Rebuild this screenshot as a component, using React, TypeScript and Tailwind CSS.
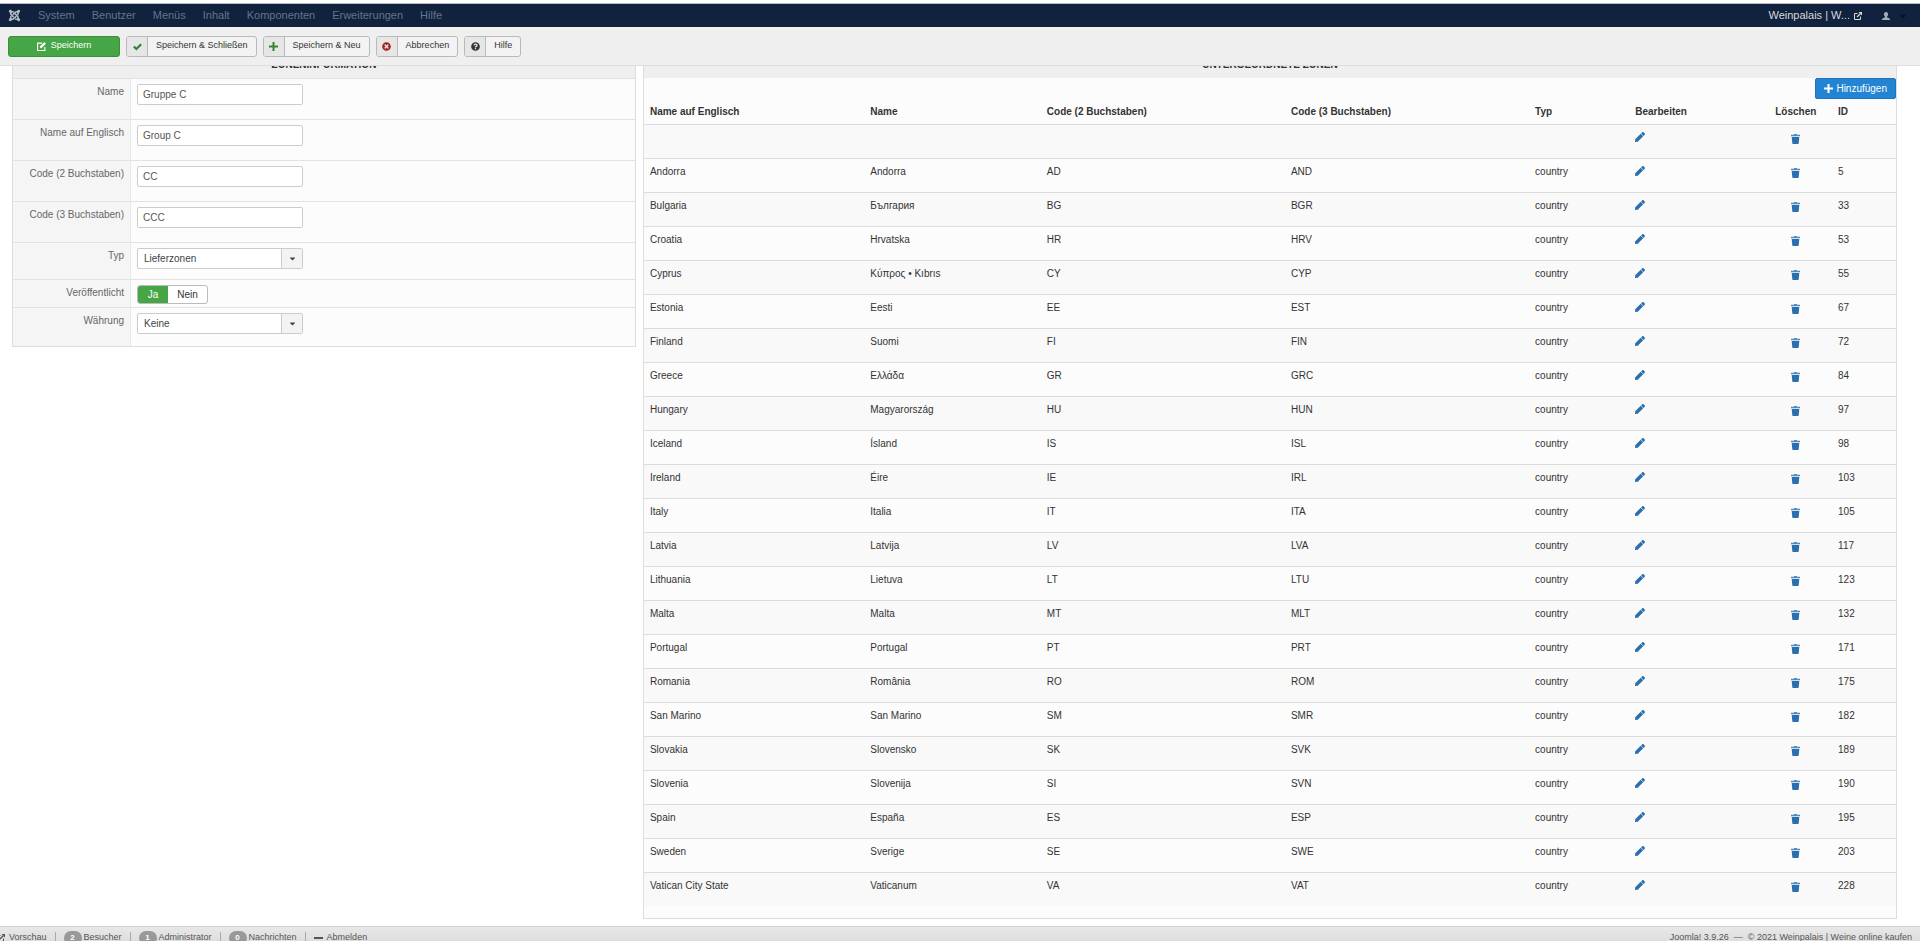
import type { ReactNode } from 'react'
import { FaCaretDown, FaJoomla, FaPen, FaQuestionCircle, FaTimesCircle } from 'react-icons/fa'

const menu = ['System', 'Benutzer', 'Menüs', 'Inhalt', 'Komponenten', 'Erweiterungen', 'Hilfe']

const zones = [
  { english: 'Andorra', name: 'Andorra', code2: 'AD', code3: 'AND', id: 5 },
  { english: 'Bulgaria', name: 'България', code2: 'BG', code3: 'BGR', id: 33 },
  { english: 'Croatia', name: 'Hrvatska', code2: 'HR', code3: 'HRV', id: 53 },
  { english: 'Cyprus', name: 'Κύπρος • Kıbrıs', code2: 'CY', code3: 'CYP', id: 55 },
  { english: 'Estonia', name: 'Eesti', code2: 'EE', code3: 'EST', id: 67 },
  { english: 'Finland', name: 'Suomi', code2: 'FI', code3: 'FIN', id: 72 },
  { english: 'Greece', name: 'Ελλάδα', code2: 'GR', code3: 'GRC', id: 84 },
  { english: 'Hungary', name: 'Magyarország', code2: 'HU', code3: 'HUN', id: 97 },
  { english: 'Iceland', name: 'Ísland', code2: 'IS', code3: 'ISL', id: 98 },
  { english: 'Ireland', name: 'Éire', code2: 'IE', code3: 'IRL', id: 103 },
  { english: 'Italy', name: 'Italia', code2: 'IT', code3: 'ITA', id: 105 },
  { english: 'Latvia', name: 'Latvija', code2: 'LV', code3: 'LVA', id: 117 },
  { english: 'Lithuania', name: 'Lietuva', code2: 'LT', code3: 'LTU', id: 123 },
  { english: 'Malta', name: 'Malta', code2: 'MT', code3: 'MLT', id: 132 },
  { english: 'Portugal', name: 'Portugal', code2: 'PT', code3: 'PRT', id: 171 },
  { english: 'Romania', name: 'România', code2: 'RO', code3: 'ROM', id: 175 },
  { english: 'San Marino', name: 'San Marino', code2: 'SM', code3: 'SMR', id: 182 },
  { english: 'Slovakia', name: 'Slovensko', code2: 'SK', code3: 'SVK', id: 189 },
  { english: 'Slovenia', name: 'Slovenija', code2: 'SI', code3: 'SVN', id: 190 },
  { english: 'Spain', name: 'España', code2: 'ES', code3: 'ESP', id: 195 },
  { english: 'Sweden', name: 'Sverige', code2: 'SE', code3: 'SWE', id: 203 },
  { english: 'Vatican City State', name: 'Vaticanum', code2: 'VA', code3: 'VAT', id: 228 },
]

const EditIcon = () => (
  <svg viewBox="0 0 16 16" className="h-[9px] w-[9px]" fill="none" stroke="currentColor" strokeWidth="2">
    <path d="M9 2H1v13h13V9" />
    <path d="M6 10l8.500-8.500" strokeWidth="4" />
  </svg>
)

const ExternalIcon = () => (
  <svg viewBox="0 0 16 16" className="h-2 w-2" fill="none" stroke="currentColor" strokeWidth="2">
    <path d="M7 3H1v12h12V9" />
    <path d="M6 10l7-7" strokeWidth="2.500" />
    <path d="M9 0h7v7z" fill="currentColor" stroke="none" />
  </svg>
)

const UserIcon = () => (
  <svg viewBox="0 0 16 16" className="h-2 w-2" fill="currentColor">
    <path d="M8 0c2.500 0 4 1.800 4 4.500 0 2-.8 3.800-2 4.700v1.500l5 2.300c.7.4 1 1 1 3H0c0-2 .3-2.600 1-3l5-2.300V9.200C4.800 8.300 4 6.500 4 4.500 4 1.800 5.500 0 8 0z" />
  </svg>
)

const PlusIcon = () => (
  <svg viewBox="0 0 9 9" className="h-[9px] w-[9px]" fill="currentColor">
    <path d="M3.500 0h2v3.500H9v2H5.500V9h-2V5.500H0v-2h3.500z" />
  </svg>
)

const CheckIcon = () => (
  <svg viewBox="0 0 16 16" className="h-[9px] w-[9px]" fill="none" stroke="currentColor" strokeWidth="4">
    <path d="M1.500 8l4.500 4.500L14.500 4" />
  </svg>
)

const TrashIcon = () => (
  <svg viewBox="0 0 9 10" className="h-[10px] w-[9px]" fill="currentColor">
    <path d="M3 0h3v.7h3v1.600H0V.7h3z" opacity=".8" />
    <path d="M.7 2.900h7.600L7.700 9.300c0 .4-.3.7-.7.7H2c-.4 0-.7-.3-.7-.7z" />
  </svg>
)

const ToolbarButton = ({ icon, children }: { icon: ReactNode; children: ReactNode }) => (
  <button type="button" className="flex h-[21px] items-stretch overflow-hidden rounded-[3px] border border-[#b9b9b9] bg-[#f3f3f3] text-[9px] text-[#333]">
    <span className="flex w-[21px] items-center justify-center border-r border-[#b9b9b9] bg-[#e6e6e6] text-[9px]">{icon}</span>
    <span className="flex items-center px-2">{children}</span>
  </button>
)

const PanelTitle = ({ children }: { children: ReactNode }) => (
  <h2 className="bg-[#efefef] text-center text-[10px] leading-[26px] font-bold text-[#333] uppercase">{children}</h2>
)

const FieldRow = ({ label, htmlFor, className, children }: { label: string; htmlFor: string; className: string; children: ReactNode }) => (
  <div className={`flex border-t border-[#e2e2e2] ${className}`}>
    <label htmlFor={htmlFor} className="w-[118px] shrink-0 border-r border-[#e8e8e8] bg-[#f5f5f5] pt-[5px] pr-[6px] text-right leading-4 text-[#666]">
      {label}
    </label>
    <div className="flex flex-1 items-start px-[6px] pt-[5px]">{children}</div>
  </div>
)

const TextField = ({ id, label, value }: { id: string; label: string; value: string }) => (
  <FieldRow label={label} htmlFor={id} className="h-[41px]">
    <input id={id} type="text" defaultValue={value} className="h-[21px] w-[166px] rounded-[2px] border border-[#ccc] bg-white px-[5px] text-[#555]" />
  </FieldRow>
)

const SelectField = ({ id, label, value, className }: { id: string; label: string; value: string; className: string }) => (
  <FieldRow label={label} htmlFor={id} className={className}>
    <div className="relative">
      <select id={id} className="block h-[21px] w-[166px] appearance-none rounded-[2px] border border-[#ccc] bg-white pl-[6px] text-[#444]">
        <option>{value}</option>
      </select>
      <span className="pointer-events-none absolute inset-y-px right-px flex w-[21px] items-center justify-center border-l border-[#ccc] bg-[#f3f3f3] text-[9px] text-[#444]">
        <FaCaretDown />
      </span>
    </div>
  </FieldRow>
)

const RowActions = () => (
  <>
    <td className="px-[6px] pt-[7px]">
      <button type="button" aria-label="Bearbeiten" className="block text-[10px] text-[#2a6fae]">
        <FaPen />
      </button>
    </td>
    <td className="px-[6px] pt-[9px]">
      <button type="button" aria-label="Löschen" className="mx-auto block text-[#2a6fae]">
        <TrashIcon />
      </button>
    </td>
  </>
)

const ZoneTable = () => (
  <table className="w-full table-fixed text-left text-[#333]">
    <colgroup>
      <col className="w-[17.6%]" />
      <col className="w-[14.1%]" />
      <col className="w-[19.5%]" />
      <col className="w-[19.5%]" />
      <col className="w-[8%]" />
      <col className="w-[10.4%]" />
      <col className="w-[5.8%]" />
      <col />
    </colgroup>
    <thead>
      <tr className="h-[25px]">
        <th className="px-[6px]">Name auf Englisch</th>
        <th className="px-[6px]">Name</th>
        <th className="px-[6px]">Code (2 Buchstaben)</th>
        <th className="px-[6px]">Code (3 Buchstaben)</th>
        <th className="px-[6px]">Typ</th>
        <th className="px-[6px]">Bearbeiten</th>
        <th className="px-[6px] text-center">Löschen</th>
        <th className="px-[6px]">ID</th>
      </tr>
    </thead>
    <tbody>
      <tr className="h-[34px] border-t border-[#ddd] align-top odd:bg-[#f9f9f9]">
        <td colSpan={5} />
        <RowActions />
        <td />
      </tr>
      {zones.map((zone) => (
        <tr key={zone.id} className="h-[34px] border-t border-[#ddd] align-top leading-4 odd:bg-[#f9f9f9]">
          <td className="px-[6px] pt-[5px]">{zone.english}</td>
          <td className="px-[6px] pt-[5px]">{zone.name}</td>
          <td className="px-[6px] pt-[5px]">{zone.code2}</td>
          <td className="px-[6px] pt-[5px]">{zone.code3}</td>
          <td className="px-[6px] pt-[5px]">country</td>
          <RowActions />
          <td className="px-[6px] pt-[5px]">{zone.id}</td>
        </tr>
      ))}
    </tbody>
  </table>
)

const Badge = ({ children }: { children: ReactNode }) => (
  <span className="flex h-[14px] w-[18px] items-center justify-center rounded-full bg-[#999] text-[8px] font-bold text-white">{children}</span>
)

const App = () => (
  <div className="flex h-screen flex-col overflow-hidden bg-white pt-[3px] font-['Liberation_Sans',Arial,sans-serif] text-[10px]">
    <nav className="flex h-6 shrink-0 items-center border-t border-[#b5bac2] bg-[#10223e] pr-3 pl-2 text-[11px] text-[#66748a]">
      <a href="#" aria-label="Joomla" className="mr-[17px] text-[13px] text-[#b4bac4]">
        <FaJoomla />
      </a>
      <div className="flex gap-[17px]">
        {menu.map((item) => (
          <a key={item} href="#">
            {item}
          </a>
        ))}
      </div>
      <a href="#" className="ml-auto flex items-center gap-1 text-[#d9d9d9]">
        Weinpalais | W... <ExternalIcon />
      </a>
      <button type="button" aria-label="Benutzermenü" className="ml-5 flex items-center gap-2 text-[#a4acb8]">
        <UserIcon />
        <FaCaretDown className="text-[10px] text-[#08111f]" />
      </button>
    </nav>

    <div className="flex h-[39px] shrink-0 items-center gap-[6px] border-b border-[#ddd] bg-[#efefef] px-2">
      <button type="button" className="flex h-[21px] w-28 items-center justify-center gap-[5px] rounded-[3px] border border-[#3b8f3b] bg-[#46a546] text-[9px] text-white">
        <EditIcon /> Speichern
      </button>
      <ToolbarButton icon={<span className="text-[#378137]"><CheckIcon /></span>}>Speichern &amp; Schließen</ToolbarButton>
      <ToolbarButton icon={<span className="text-[#378137]"><PlusIcon /></span>}>Speichern &amp; Neu</ToolbarButton>
      <ToolbarButton icon={<FaTimesCircle className="text-[#a12622]" />}>Abbrechen</ToolbarButton>
      <ToolbarButton icon={<FaQuestionCircle />}>Hilfe</ToolbarButton>
    </div>

    {/* the content sits scrolled a little way under the toolbar */}
    <main className="min-h-0 flex-1 overflow-hidden">
      <div className="-mt-[15px] flex items-start gap-[7px] pr-[23px] pl-3">
        <section className="w-[33.1%] border border-[#ddd] bg-[#fcfcfc]">
          <PanelTitle>Zoneninformation</PanelTitle>
          <TextField id="name" label="Name" value="Gruppe C" />
          <TextField id="name-english" label="Name auf Englisch" value="Group C" />
          <TextField id="code2" label="Code (2 Buchstaben)" value="CC" />
          <TextField id="code3" label="Code (3 Buchstaben)" value="CCC" />
          <SelectField id="type" label="Typ" value="Lieferzonen" className="h-[37px]" />
          <FieldRow label="Veröffentlicht" htmlFor="published" className="h-7">
            <div className="flex h-[19px] overflow-hidden rounded-[3px] border border-[#bbb] bg-white text-[#333]">
              <button id="published" type="button" className="w-[30px] bg-[#46a546] text-white">
                Ja
              </button>
              <button type="button" className="w-[39px]">
                Nein
              </button>
            </div>
          </FieldRow>
          <SelectField id="currency" label="Währung" value="Keine" className="h-[39px]" />
        </section>

        <section className="flex-1 border border-[#ddd] bg-[#fcfcfc] pb-3">
          <PanelTitle>Untergeordnete Zonen</PanelTitle>
          <div className="flex justify-end">
            <button type="button" className="flex h-[21px] items-center gap-[3px] rounded-[2px] border border-[#1f74bd] bg-[#2384d3] px-2 text-white">
              <PlusIcon /> Hinzufügen
            </button>
          </div>
          <ZoneTable />
        </section>
      </div>
    </main>

    <footer className="h-[15px] shrink-0 overflow-hidden border-t border-[#d4d4d4] bg-linear-to-b from-[#e8e8e8] to-[#dedede] text-[9px] text-[#555]">
      <div className="flex h-[21px] items-center justify-between pr-2">
        <div className="-ml-[3px] flex items-center gap-2">
          <a href="#" className="flex items-center gap-1">
            <ExternalIcon /> Vorschau
          </a>
          <span className="h-3 w-px bg-[#aaa]" />
          <span className="flex items-center gap-[2px]">
            <Badge>2</Badge> Besucher
          </span>
          <span className="h-3 w-px bg-[#aaa]" />
          <span className="flex items-center gap-[2px]">
            <Badge>1</Badge> Administrator
          </span>
          <span className="h-3 w-px bg-[#aaa]" />
          <a href="#" className="flex items-center gap-[2px]">
            <Badge>0</Badge> Nachrichten
          </a>
          <span className="h-3 w-px bg-[#aaa]" />
          <a href="#" className="flex items-center gap-1">
            <span className="h-[2px] w-[9px] bg-[#555]" /> Abmelden
          </a>
        </div>
        <p className="whitespace-pre">Joomla! 3.9.26  —  © 2021 Weinpalais | Weine online kaufen</p>
      </div>
    </footer>
  </div>
)

export default App
